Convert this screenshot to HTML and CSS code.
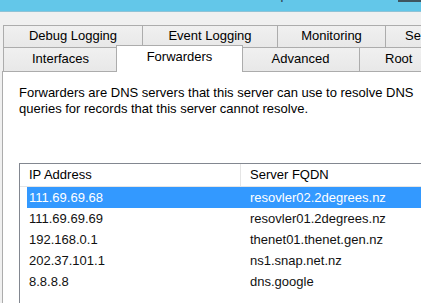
FILE: index.html
```html
<!DOCTYPE html>
<html>
<head>
<meta charset="utf-8">
<link rel="stylesheet" href="styles.css">
</head>
<body>
<div class="titlebar">
  <span class="title">THENET-AD01 Properties</span>
  <span class="close"></span>
</div>
<div class="dialog">
  <div class="tabs">
    <div class="tabrow back">
      <div class="tab w-debug">Debug Logging</div>
      <div class="tab w-event">Event Logging</div>
      <div class="tab w-monitor">Monitoring</div>
      <div class="tab w-rest">Se</div>
    </div>
    <div class="tabrow front">
      <div class="tab w-ifaces">Interfaces</div>
      <div class="tab selected w-fwd">Forwarders</div>
      <div class="tab w-adv">Advanced</div>
      <div class="tab w-rest">Root</div>
    </div>
  </div>
  <div class="panel">
    <p class="desc">Forwarders are DNS servers that this server can use to resolve DNS queries for records that this server cannot resolve.</p>
    <div class="list">
      <div class="header">
        <div class="hcell">IP Address</div>
        <div class="hcell">Server FQDN</div>
      </div>
      <div class="row sel"><div class="c1">111.69.69.68</div><div class="c2">resovler02.2degrees.nz</div></div>
      <div class="row"><div class="c1">111.69.69.69</div><div class="c2">resovler01.2degrees.nz</div></div>
      <div class="row"><div class="c1">192.168.0.1</div><div class="c2">thenet01.thenet.gen.nz</div></div>
      <div class="row"><div class="c1">202.37.101.1</div><div class="c2">ns1.snap.net.nz</div></div>
      <div class="row"><div class="c1">8.8.8.8</div><div class="c2">dns.google</div></div>
    </div>
  </div>
</div>
</body>
</html>
```
FILE: styles.css
```css
html, body {
  margin: 0;
  padding: 0;
  width: 421px;
  height: 303px;
  overflow: hidden;
  background: #f0f0f0;
  font-family: "Liberation Sans", Arial, sans-serif;
  font-size: 13px;
  color: #000;
}

.titlebar {
  height: 11px;
  border-bottom: 1px solid #8fc3d6;
  background: #63c7e9;
  display: flex;
  overflow: hidden;
}
.title {
  margin-left: 142px;
  margin-top: -15px;
  font-size: 15px;
  line-height: 17px;
  height: 17px;
  color: #2f4a55;
  white-space: nowrap;
  letter-spacing: 0.6px;
}
.close {
  margin-left: auto;
  width: 23px;
  height: 2px;
  background: #3e5560;
}

.dialog {
  padding-left: 2px;
}

.tabs {
  padding-top: 13px;
  padding-left: 1px;
}
.tabrow {
  display: flex;
  white-space: nowrap;
}
.tab {
  box-sizing: border-box;
  flex: none;
  height: 22px;
  border: 1px solid #acacac;
  border-bottom: none;
  margin-right: -1px;
  background: linear-gradient(#f0f0f0, #e8e8e8);
  text-align: center;
  line-height: 20px;
  overflow: hidden;
}
.front {
  height: 24px;
}
.front .tab {
  height: 24px;
  line-height: 22px;
}
.tab.selected {
  position: relative;
  z-index: 2;
  height: 27px;
  margin-top: -2px;
  margin-left: -1px;
  margin-right: -2px;
  background: #fff;
  line-height: 22px;
}
.w-debug { width: 140px; }
.w-event { width: 136px; }
.w-monitor { width: 109px; }
.w-ifaces { width: 115px; }
.w-fwd { width: 127px; }
.w-adv { width: 119px; }
.w-rest {
  flex: 1 1 0;
  min-width: 0;
  margin-right: 0;
  border-right: none;
  text-align: left;
  padding-left: 19px;
}
.front .w-rest { padding-left: 25px; }

.panel {
  box-sizing: border-box;
  background: #fff;
  border-top: 1px solid #acacac;
  border-left: 1px solid #acacac;
  height: 233px;
  padding-left: 16px;
  padding-top: 13px;
  overflow: hidden;
}
.desc {
  margin: 0;
  line-height: 16px;
  width: 404px;
}

.list {
  box-sizing: border-box;
  margin-top: 46px;
  border-top: 1px solid #828790;
  border-left: 1px solid #828790;
  height: 140px;
}
.header {
  display: grid;
  grid-template-columns: 221px 1fr;
  height: 22px;
  border-bottom: 1px solid #e5e5e5;
  line-height: 22px;
}
.hcell {
  padding-left: 9px;
}
.hcell:first-child {
  border-right: 1px solid #e5e5e5;
}
.row {
  display: grid;
  grid-template-columns: 214px 1fr;
  margin-left: 7px;
  height: 21px;
  line-height: 22px;
  color: #111;
}
.row .c1 { padding-left: 2px; }
.row .c2 { padding-left: 9px; }
.row.sel {
  background: #3399ff;
  color: #fff;
}
```
